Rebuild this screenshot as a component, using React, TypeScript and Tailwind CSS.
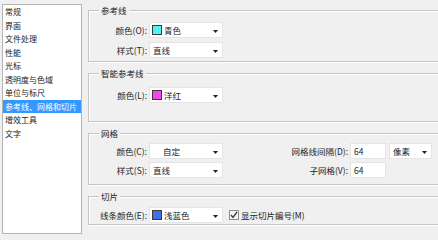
import React from "react";

const font = { fontFamily: '"Noto Sans CJK SC", "Noto Sans", sans-serif' };

const items = [
  "常规",
  "界面",
  "文件处理",
  "性能",
  "光标",
  "透明度与色域",
  "单位与标尺",
  "参考线、网格和切片",
  "增效工具",
  "文字",
];

function Arrow() {
  return (
    <svg width="5" height="3" viewBox="0 0 5 3" className="absolute right-[4px] top-[7px]">
      <path d="M0 0 H5 L2.5 3 Z" fill="#222" />
    </svg>
  );
}

function Select({
  text,
  swatch,
  indent,
  width = "w-[74px]",
}: {
  text: string;
  swatch?: string;
  indent?: boolean;
  width?: string;
}) {
  return (
    <div className={`relative h-[16px] ${width} shrink-0 bg-white border border-[#e4e4e4] flex items-center`}>
      {swatch && (
        <span
          className="ml-[2px] w-[10px] h-[10px] border border-[#3a3a3a] shrink-0"
          style={{ backgroundColor: swatch }}
        />
      )}
      <span className={swatch ? "ml-[2px]" : indent ? "ml-[13px]" : "ml-[3px]"}>{text}</span>
      <Arrow />
    </div>
  );
}

function Input({ value }: { value: string }) {
  return (
    <div className="h-[16px] w-[36px] shrink-0 bg-white border border-[#e4e4e4] flex items-center pl-[3px]">
      {value}
    </div>
  );
}

function Label({ children, w = "w-[60px]" }: { children: React.ReactNode; w?: string }) {
  return <span className={`${w} shrink-0 text-right pr-[2px] whitespace-nowrap`}>{children}</span>;
}

function Group({
  title,
  className,
  children,
}: {
  title: string;
  className: string;
  children: React.ReactNode;
}) {
  return (
    <div
      className={`relative border border-[#c4c4c4] shadow-[inset_1px_1px_0_#ffffff,1px_1px_0_#ffffff] ${className}`}
    >
      <span className="absolute left-[10px] top-[-7px] px-[2px] bg-[#f0f0f0] leading-[13px]">
        {title}
      </span>
      {children}
    </div>
  );
}

export default function App() {
  return (
    <div
      className="w-[438px] h-[240px] bg-[#f0f0f0] overflow-hidden flex text-[8.5px] leading-[13px] text-[#222]"
      style={font}
    >
      <div className="ml-[2px] mt-[4px] w-[80px] h-[230px] shrink-0 bg-white border border-[#b4b4b4] text-[8px]">
        {items.map((item, i) => (
          <div
            key={item}
            className={`h-[13.5px] leading-[13.5px] pl-[2px] whitespace-nowrap ${
              i === 7 ? "bg-[#3399ff] text-white" : ""
            }`}
          >
            {item}
          </div>
        ))}
      </div>

      <div className="ml-[6px] pt-[10px] w-[360px] shrink-0">
        <Group title="参考线" className="h-[52px] pt-[11px] flex flex-col gap-[4px]">
          <div className="flex items-center">
            <Label>颜色(O):</Label>
            <Select text="青色" swatch="#4ff5f5" />
          </div>
          <div className="flex items-center">
            <Label>样式(T):</Label>
            <Select text="直线" />
          </div>
        </Group>

        <Group title="智能参考线" className="mt-[11px] h-[49px] pt-[13px]">
          <div className="flex items-center">
            <Label>颜色(L):</Label>
            <Select text="洋红" swatch="#f545f0" />
          </div>
        </Group>

        <Group title="网格" className="mt-[11px] h-[52px] pt-[9px] flex flex-col gap-[3px]">
          <div className="flex items-center">
            <Label>颜色(C):</Label>
            <Select text="自定" indent />
            <Label w="w-[127px]">网格线间隔(D):</Label>
            <Input value="64" />
            <div className="ml-[3px]">
              <Select text="像素" width="w-[43px]" />
            </div>
          </div>
          <div className="flex items-center">
            <Label>样式(S):</Label>
            <Select text="直线" />
            <Label w="w-[127px]">子网格(V):</Label>
            <Input value="64" />
          </div>
        </Group>

        <Group title="切片" className="mt-[11px] h-[29px] pt-[10px]">
          <div className="flex items-center">
            <Label>线条颜色(E):</Label>
            <Select text="浅蓝色" swatch="#3f6fe6" />
            <span className="ml-[6px] w-[10px] h-[10px] border border-[#8e8e8e] bg-[#f4f4f4] flex items-center justify-center shrink-0">
              <svg width="8" height="8" viewBox="0 0 8 8">
                <path d="M1 4 L3 6.5 L7 1" fill="none" stroke="#3a3a4a" strokeWidth="1.3" />
              </svg>
            </span>
            <span className="ml-[2px] whitespace-nowrap">显示切片编号(M)</span>
          </div>
        </Group>
      </div>
    </div>
  );
}
